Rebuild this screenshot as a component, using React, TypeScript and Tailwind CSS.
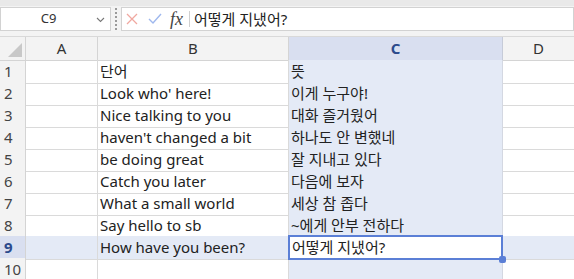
import React from "react";

const rows: [string, string][] = [
  ["단어", "뜻"],
  ["Look who' here!", "이게 누구야!"],
  ["Nice talking to you", "대화 즐거웠어"],
  ["haven't changed a bit", "하나도 안 변했네"],
  ["be doing great", "잘 지내고 있다"],
  ["Catch you later", "다음에 보자"],
  ["What a small world", "세상 참 좁다"],
  ["Say hello to sb", "~에게 안부 전하다"],
  ["How have you been?", "어떻게 지냈어?"],
  ["", ""],
];

const FONT = { fontFamily: '"Segoe UI", "Noto Sans", "Noto Sans CJK KR", sans-serif' };

export default function App() {
  const grid = "grid grid-cols-[26px_72px_191px_214px_1fr]";
  return (
    <div className="w-[574px] h-[279px] overflow-hidden bg-white text-[#222]" style={FONT}>
      {/* formula bar */}
      <div className="h-[36px] bg-[#f3f3f3] border-t-[6px] border-[#e9e9e9] flex items-start pt-[1px]">
        <div className="w-[111px] h-[24px] bg-white border border-[#d2d2d2] flex items-center relative">
          <span className="flex-1 text-center text-[13px] text-[#333] pr-[14px]">C9</span>
          <svg width="9" height="6" viewBox="0 0 9 6" className="absolute right-[5px] top-[9px]">
            <path d="M1 1l3.5 3.5L8 1" fill="none" stroke="#777" strokeWidth="1.1" />
          </svg>
        </div>
        <div className="w-[10px] h-[22px] flex justify-center mt-[1px]">
          <div className="w-[2px] h-full border-l-[2px] border-dotted border-[#9a9a9a]" />
        </div>
        <div className="flex-1 h-[24px] bg-white border border-[#d2d2d2] flex items-center">
          <svg width="12" height="12" viewBox="0 0 12 12" className="ml-[4px]">
            <path d="M1 1l10 10M11 1L1 11" stroke="#f0a8a0" strokeWidth="1.3" />
          </svg>
          <svg width="14" height="12" viewBox="0 0 14 12" className="ml-[10px]">
            <path d="M1 6l4 4L13 1" fill="none" stroke="#9fb8ee" strokeWidth="1.4" />
          </svg>
          <span className="ml-[8px] text-[18px] leading-none italic text-[#444]" style={{ fontFamily: '"Liberation Serif", serif' }}>
            fx
          </span>
          <div className="ml-[6px] w-[1px] h-[16px] bg-[#d0d0d0]" />
          <span className="ml-[4px] text-[15px] text-[#222]">어떻게 지냈어?</span>
        </div>
      </div>

      {/* header row */}
      <div className={`${grid} h-[24px] bg-[#f3f3f3] border-t border-[#d9d9d9]`}>
        <div className="border-r border-b border-[#d4d4d4] relative">
          <svg width="14" height="14" viewBox="0 0 14 14" className="absolute right-[3px] bottom-[3px]">
            <path d="M14 0V14H0Z" fill="#c8c8c8" />
          </svg>
        </div>
        <div className="border-r border-b border-[#d4d4d4] flex items-center justify-center text-[15px] text-[#333]">A</div>
        <div className="border-r border-b border-[#d4d4d4] flex items-center justify-center text-[15px] text-[#333]">B</div>
        <div className="border-r border-b border-[#c6cbd8] bg-[#d9dff0] flex items-center justify-center text-[15px] font-bold text-[#2c4a8c]">C</div>
        <div className="border-b border-[#d4d4d4] flex items-center justify-center text-[15px] text-[#333]">D</div>
      </div>

      {rows.map(([b, c], i) => {
        const sel = i === 8;
        return (
          <div key={i} className={`${grid} h-[22px]`}>
            <div
              className={`border-r border-b border-[#d4d4d4] flex items-center pl-[4px] text-[15px] ${
                sel ? "bg-[#d9dff0] font-bold text-[#2c4a8c]" : "bg-[#f3f3f3] text-[#444]"
              }`}
            >
              {i + 1}
            </div>
            <div className={`border-r border-b border-[#dadada] ${sel ? "bg-[#e4eaf6]" : ""}`} />
            <div className={`border-r border-b border-[#dadada] flex items-center pl-[2px] text-[15px] ${sel ? "bg-[#e4eaf6]" : ""}`}>
              {b}
            </div>
            <div className={`border-r border-b border-[#d4d8e2] bg-[#e4eaf6] flex items-center text-[15px] relative ${sel ? "z-10" : ""}`}>
              {sel ? (
                <div className="absolute left-[-1px] top-[-1px] right-[-1px] bottom-[-1px] bg-white border-2 border-[#5b7fd6] flex items-center pl-[2px]">
                  {c}
                  <div className="absolute right-[-5px] bottom-[-5px] w-[7px] h-[7px] rounded-[2px] bg-[#5b7fd6]" />
                </div>
              ) : (
                <span className="pl-[2px]">{c}</span>
              )}
            </div>
            <div className={`border-b border-[#dadada] ${sel ? "bg-[#e4eaf6]" : ""}`} />
          </div>
        );
      })}
    </div>
  );
}
